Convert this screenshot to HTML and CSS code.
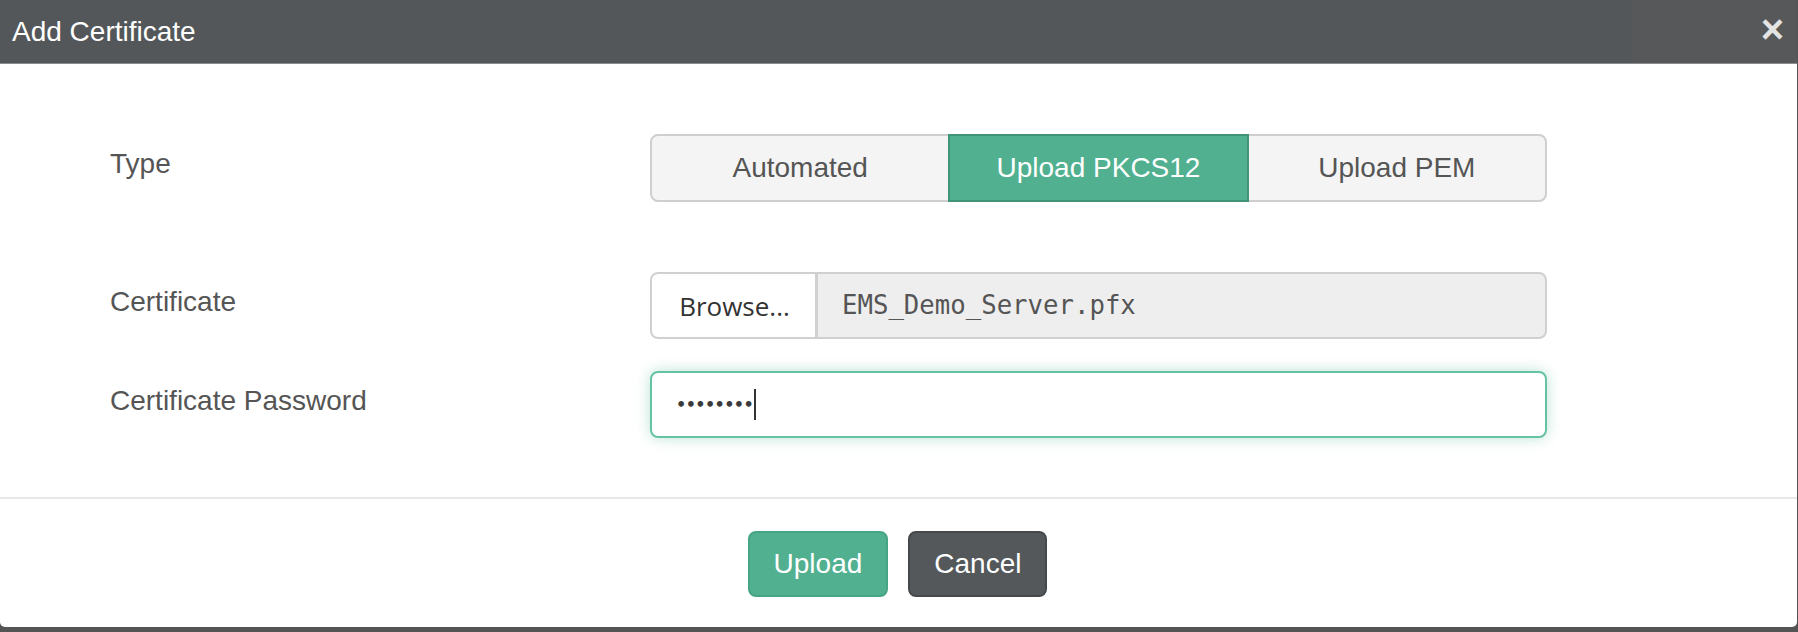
FILE: index.html
```html
<!DOCTYPE html>
<html lang="en">
<head>
<meta charset="utf-8">
<title>Add Certificate</title>
<link rel="stylesheet" href="styles.css">
</head>
<body>
<div class="modal">
  <div class="modal-header">
    <h4 class="modal-title">Add Certificate</h4>
    <button class="close" type="button" aria-label="Close">&times;</button>
  </div>
  <div class="modal-body">
    <div class="form-row type-row">
      <label class="form-label">Type</label>
      <div class="control">
        <div class="btn-group">
          <button class="seg" type="button">Automated</button>
          <button class="seg active" type="button">Upload PKCS12</button>
          <button class="seg" type="button">Upload PEM</button>
        </div>
      </div>
    </div>
    <div class="form-row">
      <label class="form-label">Certificate</label>
      <div class="control">
        <div class="file-group">
          <button class="browse" type="button">Browse...</button>
          <div class="file-name">EMS_Demo_Server.pfx</div>
        </div>
      </div>
    </div>
    <div class="form-row">
      <label class="form-label">Certificate Password</label>
      <div class="control">
        <div class="text-input focused"><span class="dots">••••••••</span><span class="caret"></span></div>
      </div>
    </div>
  </div>
  <div class="modal-footer">
    <button class="btn btn-primary" type="button">Upload</button>
    <button class="btn btn-dark" type="button">Cancel</button>
  </div>
</div>
</body>
</html>
```
FILE: styles.css
```css
* { box-sizing: border-box; }
html, body { margin: 0; padding: 0; }
body {
  background: #545454;
  font-family: "Liberation Sans", Arial, sans-serif;
  font-size: 28px;
  color: #555;
  height: 632px;
  overflow: hidden;
}
.modal {
  width: 1797px;
  height: 627px;
  background: #fff;
  border-radius: 0 0 5px 5px;
  display: flex;
  flex-direction: column;
}
.modal-header {
  height: 64px;
  background: #53575a;
  border-bottom: 1px solid #8a8c8e;
  display: flex;
  align-items: stretch;
  justify-content: space-between;
}
.modal-title {
  margin: 0;
  font-weight: normal;
  font-size: 28px;
  line-height: 63px;
  color: #fff;
  padding-left: 12px;
}
.close {
  width: 165px;
  border: 0;
  background: #575859;
  color: #e4e4e4;
  font-family: "Liberation Sans", Arial, sans-serif;
  font-size: 40px;
  font-weight: bold;
  line-height: 1;
  padding: 0 13px 6px 0;
  text-align: right;
  cursor: pointer;
}
.modal-body {
  padding: 70px 0 0 110px;
  height: 435px;
  border-bottom: 2px solid #e8e8e8;
}
.form-row {
  display: grid;
  grid-template-columns: 540px 897px;
  margin-bottom: 32px;
}
.type-row { margin-bottom: 70px; }
.form-label {
  padding-top: 10px;
  line-height: 40px;
  color: #555;
}
.btn-group {
  display: flex;
  height: 68px;
}
.seg {
  flex: 1;
  font-family: "Liberation Sans", Arial, sans-serif;
  font-size: 28px;
  color: #555;
  background: #f4f4f4;
  border: 2px solid #cfcfcf;
  margin-left: -2px;
  padding: 0;
}
.seg:first-child { margin-left: 0; border-radius: 8px 0 0 8px; }
.seg:last-child { border-radius: 0 8px 8px 0; }
.seg.active {
  background: #50b08f;
  border-color: #3f9576;
  color: #fff;
  position: relative;
}
.file-group {
  display: flex;
  height: 67px;
}
.browse {
  width: 167px;
  background: #fff;
  border: 2px solid #d0d0d0;
  border-radius: 8px 0 0 8px;
  font-family: "Open Sans", "Noto Sans", sans-serif;
  font-size: 26px;
  color: #333;
  padding: 0 0 0 2px;
}
.file-name {
  flex: 1;
  background: #eee;
  border: 2px solid #d0d0d0;
  border-left-width: 3px;
  margin-left: -2px;
  border-radius: 0 8px 8px 0;
  font-family: "DejaVu Sans Mono", "Liberation Mono", monospace;
  font-size: 25.7px;
  line-height: 63px;
  padding-left: 24px;
  color: #555;
}
.text-input {
  height: 67px;
  border: 2px solid #66c2a4;
  border-radius: 8px;
  background: #fff;
  display: flex;
  align-items: center;
  padding-left: 24px;
}
.text-input.focused {
  box-shadow: 0 0 14px rgba(102, 194, 164, 0.45);
}
.dots {
  font-family: "DejaVu Sans", sans-serif;
  font-size: 16px;
  font-weight: bold;
  color: #3a3a3a;
  letter-spacing: -0.6px;
}
.caret {
  display: inline-block;
  width: 2px;
  height: 31px;
  background: #333;
  margin-left: 1px;
}
.modal-footer {
  flex: 1;
  display: flex;
  justify-content: center;
  align-items: center;
  gap: 20px;
  padding: 2px 2px 0 0;
}
.btn {
  font-family: "Liberation Sans", Arial, sans-serif;
  font-size: 28px;
  line-height: 38px;
  padding: 12px 24px;
  border: 2px solid transparent;
  border-radius: 8px;
  color: #fff;
  cursor: pointer;
}
.btn-primary { background: #50b08f; border-color: #46a584; }
.btn-dark { background: #54585b; border-color: #46494c; }
```
